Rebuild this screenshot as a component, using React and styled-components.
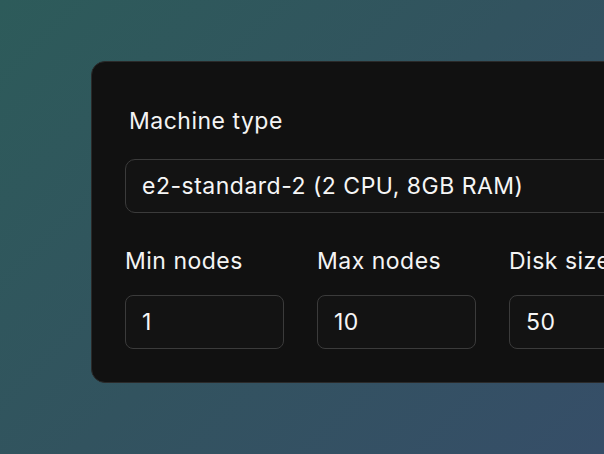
import React from "react";
import styled, { createGlobalStyle } from "styled-components";

const Global = createGlobalStyle`
  html, body {
    margin: 0;
    padding: 0;
    width: 604px;
    height: 454px;
    overflow: hidden;
  }
  body {
    background: linear-gradient(135deg, #2d5b5a 0%, #32535f 50%, #364e68 100%);
    font-family: Inter, "Noto Sans", sans-serif;
    color: #f4f4f4;
  }
`;

const Stage = styled.main`
  padding: 61px 0 0 91px;
`;

const Card = styled.section`
  width: 640px;
  box-sizing: border-box;
  background: #111111;
  border: 1px solid #2a2a2a;
  border-radius: 14px;
  padding: 45px 33px 33px;
  display: flex;
  flex-direction: column;
  gap: 34px;
`;

const Field = styled.label`
  display: flex;
  flex-direction: column;
  gap: ${(p) => p.$gap || 20}px;
`;

const LabelText = styled.span`
  font-size: 23px;
  line-height: 28px;
  letter-spacing: 0.5px;
  font-weight: 400;
  padding-left: ${(p) => (p.$inset ? "4px" : "0")};
`;

const Control = styled.div`
  box-sizing: border-box;
  height: 54px;
  border: 1.5px solid #3b3b3b;
  border-radius: ${(p) => (p.$round ? 10 : 8)}px;
  background: #131313;
  display: flex;
  align-items: center;
  padding: 0 16px;
  font-size: 23px;
  letter-spacing: 0.5px;
  color: #f6f6f6;
  white-space: nowrap;
`;

const Row = styled.div`
  display: grid;
  grid-template-columns: repeat(3, 159px);
  column-gap: 33px;
`;

export default function App() {
  return (
    <>
      <Global />
      <Stage>
        <Card>
          <Field $gap={24}>
            <LabelText $inset>Machine type</LabelText>
            <Control $round>e2-standard-2 (2 CPU, 8GB RAM)</Control>
          </Field>
          <Row>
            <Field>
              <LabelText>Min nodes</LabelText>
              <Control>1</Control>
            </Field>
            <Field>
              <LabelText>Max nodes</LabelText>
              <Control>10</Control>
            </Field>
            <Field>
              <LabelText>Disk size</LabelText>
              <Control>50</Control>
            </Field>
          </Row>
        </Card>
      </Stage>
    </>
  );
}
